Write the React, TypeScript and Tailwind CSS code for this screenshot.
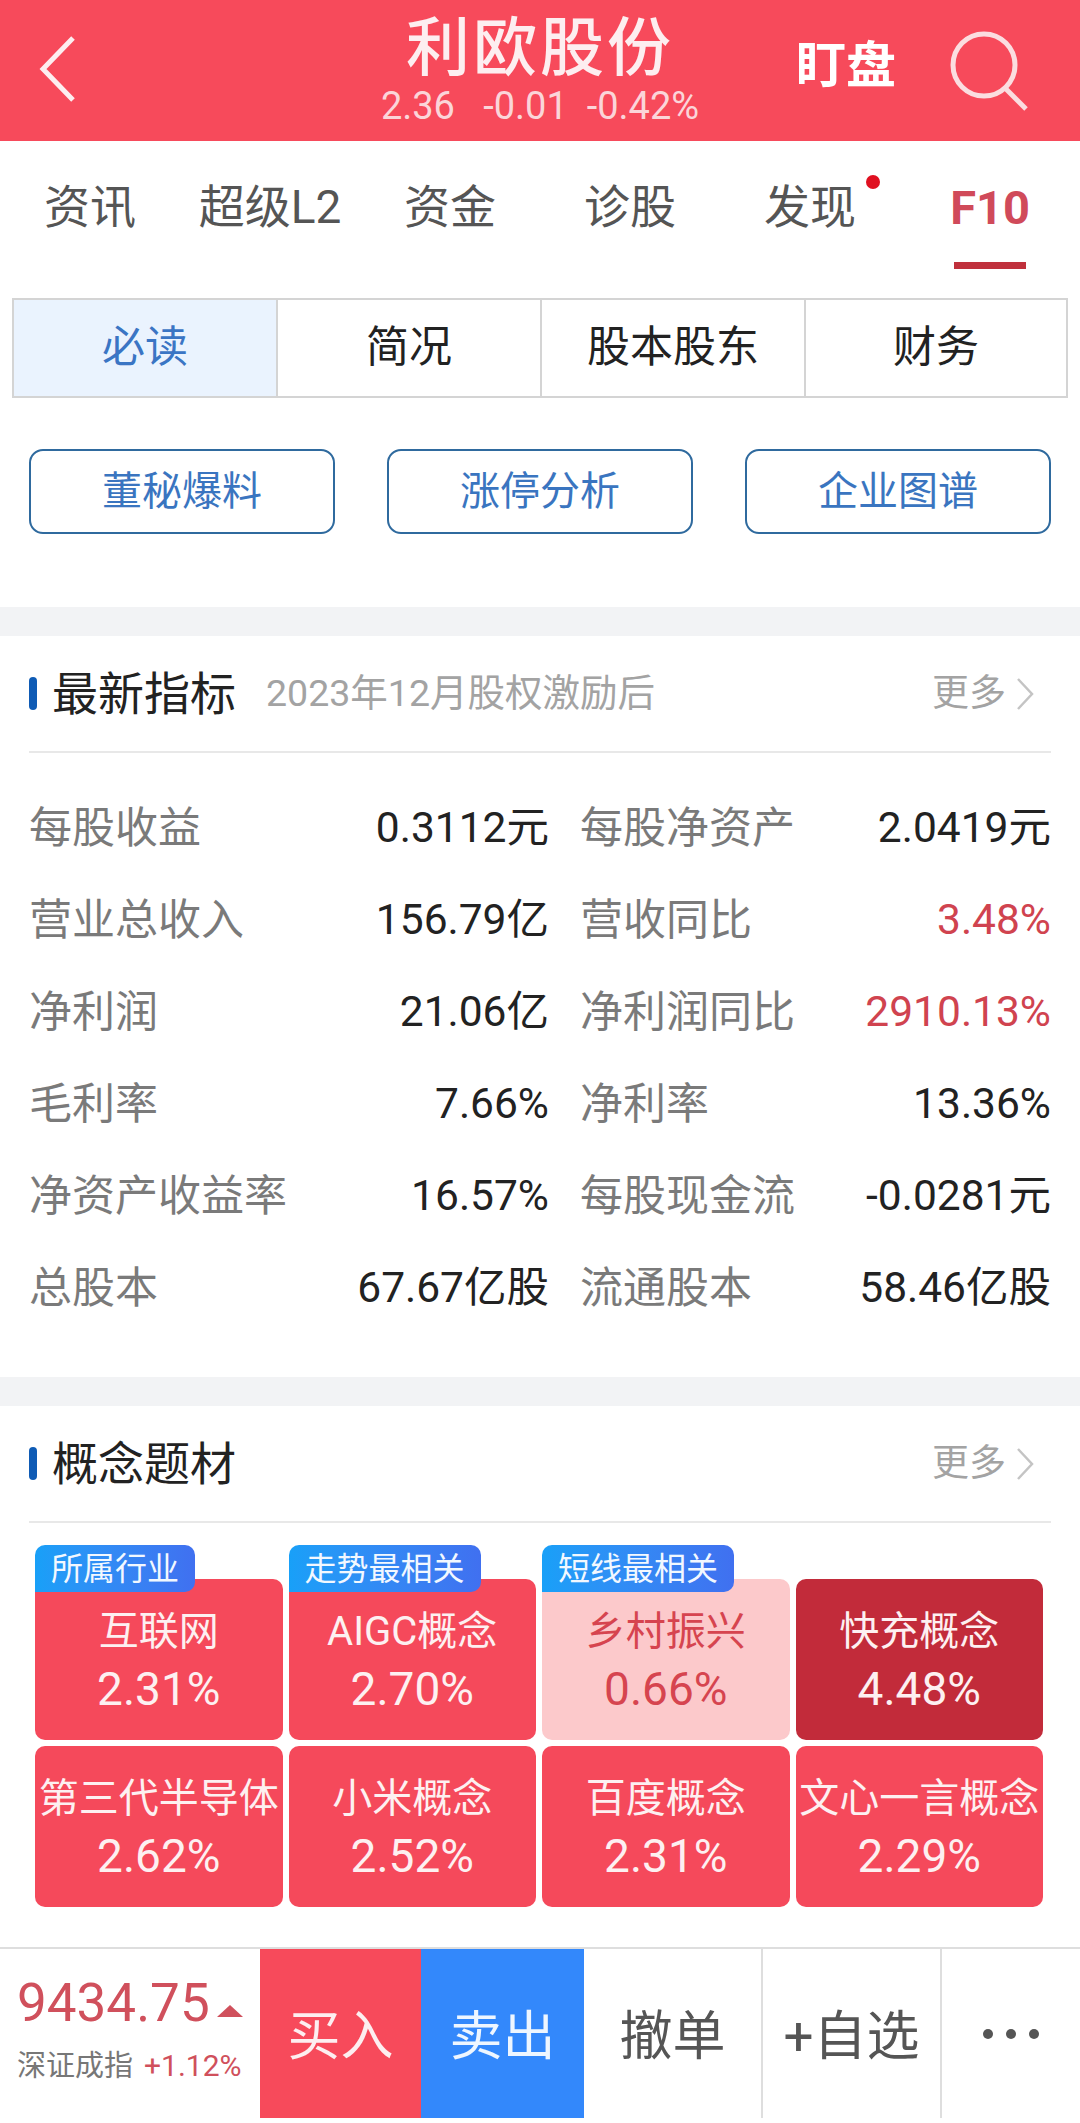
import React from "react";

const FONT = "font-['Roboto','Noto_Sans_CJK_SC',sans-serif]";

interface Metric {
  label: string;
  value: string;
  red?: boolean;
}

const metrics: Metric[][] = [
  [
    { label: "每股收益", value: "0.3112元" },
    { label: "每股净资产", value: "2.0419元" },
  ],
  [
    { label: "营业总收入", value: "156.79亿" },
    { label: "营收同比", value: "3.48%", red: true },
  ],
  [
    { label: "净利润", value: "21.06亿" },
    { label: "净利润同比", value: "2910.13%", red: true },
  ],
  [
    { label: "毛利率", value: "7.66%" },
    { label: "净利率", value: "13.36%" },
  ],
  [
    { label: "净资产收益率", value: "16.57%" },
    { label: "每股现金流", value: "-0.0281元" },
  ],
  [
    { label: "总股本", value: "67.67亿股" },
    { label: "流通股本", value: "58.46亿股" },
  ],
];

interface Concept {
  name: string;
  pct: string;
  tag?: string;
  tone: "red" | "pale" | "dark";
}

const concepts: Concept[] = [
  { name: "互联网", pct: "2.31%", tag: "所属行业", tone: "red" },
  { name: "AIGC概念", pct: "2.70%", tag: "走势最相关", tone: "red" },
  { name: "乡村振兴", pct: "0.66%", tag: "短线最相关", tone: "pale" },
  { name: "快充概念", pct: "4.48%", tone: "dark" },
  { name: "第三代半导体", pct: "2.62%", tone: "red" },
  { name: "小米概念", pct: "2.52%", tone: "red" },
  { name: "百度概念", pct: "2.31%", tone: "red" },
  { name: "文心一言概念", pct: "2.29%", tone: "red" },
];

const toneClass = {
  red: "bg-[#f5495b] text-[#fdf0f1]",
  pale: "bg-[#fcc9cb] text-[#d6444f]",
  dark: "bg-[#c22b3a] text-[#fdf0f1]",
};

function SectionHead({ title, sub }: { title: string; sub?: string }) {
  return (
    <div className="flex items-center h-[117px] border-b-2 border-[#e8e8e8]">
      <div className="w-[8px] h-[33px] rounded-full bg-[#0f5bb5]" />
      <div className="ml-[15px] text-[46px] leading-none text-[#222]">{title}</div>
      {sub && <div className="ml-[30px] text-[37.5px] leading-none text-[#a3a3a3]">{sub}</div>}
      <div className="ml-auto flex items-center pr-[16px] text-[37px] leading-none text-[#a3a3a3]">
        更多
        <svg width="20" height="34" viewBox="0 0 20 34" className="ml-[9px]" fill="none">
          <path d="M3 2 L17 17 L3 32" stroke="#c4c4c4" strokeWidth="2.5" />
        </svg>
      </div>
    </div>
  );
}

function App() {
  return (
    <div className={`${FONT} w-[1080px] h-[2123px] bg-white flex flex-col overflow-hidden`}>
      <header className="h-[141px] shrink-0 bg-[#f74a5b] grid grid-cols-[1fr_auto_1fr] text-[#fdeef0]">
        <div className="flex items-center pl-[38px] pb-[4px]">
          <svg width="40" height="68" viewBox="0 0 40 68" fill="none">
            <path d="M35 3 L5 34 L35 65" stroke="#fdeef0" strokeWidth="5" />
          </svg>
        </div>
        <div className="flex flex-col items-center pt-[17px]">
          <div className="text-[64px] leading-[64px] font-medium tracking-[3px]">利欧股份</div>
          <div className="text-[38px] leading-[42px] mt-[4px] whitespace-pre text-[#fbd5d9]">2.36   -0.01  -0.42%</div>
        </div>
        <div className="flex items-center justify-end pr-[48px] pb-[10px]">
          <span className="text-[50px] leading-none font-bold text-white">盯盘</span>
          <svg width="84" height="84" viewBox="0 0 84 84" className="ml-[52px] mt-[10px]" fill="none">
            <circle cx="36" cy="36" r="31" stroke="#fbdde0" strokeWidth="5" />
            <path d="M58 60 L78 80" stroke="#fbdde0" strokeWidth="5" />
          </svg>
        </div>
      </header>

      <nav className="h-[157px] shrink-0 grid grid-cols-6 text-[46px] leading-none text-[#555]">
        {["资讯", "超级L2", "资金", "诊股", "发现"].map((t) => (
          <div key={t} className="flex justify-center pt-[43px]">
            <span className="relative">
              {t}
              {t === "发现" && (
                <span className="absolute right-[-24px] top-[-9px] w-[14px] h-[14px] rounded-full bg-[#e01020]" />
              )}
            </span>
          </div>
        ))}
        <div className="flex flex-col items-center pt-[43px] font-bold text-[#d04a5a] text-[47px]">
          F10
          <div className="w-[72px] h-[7px] bg-[#c0303c] mt-[31px]" />
        </div>
      </nav>

      <div className="mx-[12px] h-[100px] shrink-0 grid grid-cols-[264px_264px_264px_1fr] border-2 border-[#d4d4d4] text-[43px] leading-none text-[#222]">
        <div className="flex items-center justify-center pb-[2px] bg-[#eaf3fe] text-[#3a75c4] border-r-2 border-[#d4d4d4]">必读</div>
        <div className="flex items-center justify-center pb-[2px] border-r-2 border-[#d4d4d4]">简况</div>
        <div className="flex items-center justify-center pb-[2px] border-r-2 border-[#d4d4d4]">股本股东</div>
        <div className="flex items-center justify-center pb-[2px]">财务</div>
      </div>

      <div className="mt-[51px] mx-[29px] flex justify-between shrink-0">
        {["董秘爆料", "涨停分析", "企业图谱"].map((t) => (
          <div
            key={t}
            className="w-[306px] h-[85px] rounded-[14px] border-2 border-[#2f6a9e] flex items-center justify-center text-[40px] text-[#3a75c0]"
          >
            {t}
          </div>
        ))}
      </div>

      <div className="mt-[73px] h-[29px] shrink-0 bg-[#f2f3f5]" />

      <section className="mx-[29px] shrink-0">
        <SectionHead title="最新指标" sub="2023年12月股权激励后" />
        <div className="pt-[29px] pb-[43px]">
          {metrics.map((row) => (
            <div key={row[0].label} className="h-[92px] grid grid-cols-[520px_471px] gap-x-[31px] items-center">
              {row.map((m) => (
                <div key={m.label} className="flex justify-between items-center">
                  <span className="text-[43px] text-[#7a7a7a] leading-none">{m.label}</span>
                  <span className={`text-[42.5px] leading-none ${m.red ? "text-[#d0434f]" : "text-[#222]"}`}>{m.value}</span>
                </div>
              ))}
            </div>
          ))}
        </div>
      </section>

      <div className="h-[29px] shrink-0 bg-[#f2f3f5]" />

      <section className="mx-[29px] shrink-0">
        <SectionHead title="概念题材" />
        <div className="mt-[56px] ml-[6px] mr-[8px] grid grid-cols-4 gap-x-[6px] gap-y-[6px]">
          {concepts.map((c) => (
            <div
              key={c.name}
              className={`relative h-[161px] rounded-[10px] flex flex-col items-center justify-start pt-[32px] ${toneClass[c.tone]}`}
            >
              {c.tag && (
                <div className="absolute left-0 top-[-34px] h-[47px] px-[16px] flex items-center rounded-t-[10px] rounded-br-[10px] bg-gradient-to-r from-[#18a0f8] to-[#4070f0] text-[32px] leading-none text-[#f2f8ff]">
                  {c.tag}
                </div>
              )}
              <div className="text-[40px] leading-[42px] whitespace-nowrap">{c.name}</div>
              <div className="text-[46px] leading-[46px] mt-[13px]">{c.pct}</div>
            </div>
          ))}
        </div>
      </section>

      <footer className="mt-[40px] h-[171px] shrink-0 border-t-2 border-[#dedede] flex">
        <div className="w-[260px] shrink-0 pl-[17px] pt-[26px]">
          <div className="flex items-end text-[#d0505c]">
            <span className="text-[53px] leading-[56px]">9434.75</span>
            <span className="ml-[7px] mb-[14px] w-0 h-0 border-x-[13px] border-x-transparent border-b-[12px] border-b-[#d0505c]" />
          </div>
          <div className="flex items-center mt-[20px] whitespace-nowrap">
            <span className="text-[29px] leading-none text-[#777]">深证成指</span>
            <span className="ml-[11px] text-[30px] leading-none text-[#d0505c]">+1.12%</span>
          </div>
        </div>
        <div className="w-[161px] bg-[#f74a5b] text-[#fdeef0] flex items-center justify-center pt-[8px] text-[53px]">买入</div>
        <div className="w-[163px] bg-[#3388fb] text-[#eef6ff] flex items-center justify-center pt-[8px] text-[53px]">卖出</div>
        <div className="w-[179px] border-r-2 border-[#dedede] flex items-center justify-center pt-[8px] text-[53px] text-[#555]">撤单</div>
        <div className="w-[179px] border-r-2 border-[#dedede] flex items-center justify-center pt-[8px] text-[53px] text-[#555]">+自选</div>
        <div className="flex-1 flex items-center justify-center gap-[13px]">
          <span className="w-[10px] h-[10px] rounded-full bg-[#555]" />
          <span className="w-[10px] h-[10px] rounded-full bg-[#555]" />
          <span className="w-[10px] h-[10px] rounded-full bg-[#555]" />
        </div>
      </footer>
    </div>
  );
}

export default App;
